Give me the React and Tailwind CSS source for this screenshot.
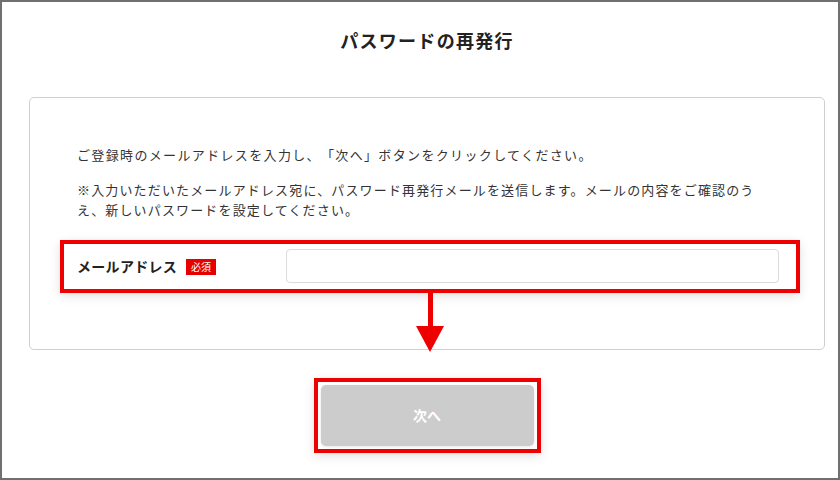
const App = () => {
  return (
    <div
      className="w-[840px] h-[480px] bg-white border-2 border-[#707070] overflow-hidden text-[#333] [text-spacing-trim:space-all]"
      style={{ fontFamily: '"Noto Sans CJK JP", "Noto Sans", sans-serif' }}
    >
      <div className="ml-[27px] w-[796px]">
        {/* Title */}
        <h1 className="pt-[25px] text-center text-[18px] leading-[26px] font-bold tracking-[1.3px] text-[#222]">
          パスワードの再発行
        </h1>

        {/* Card */}
        <div className="relative mt-[44px] border border-[#cfcfcf] rounded-[5px] pt-[47px] pb-[56px]">
          <p className="pl-[47px] text-[13px] leading-[20px] tracking-[1.35px] whitespace-nowrap">
            ご登録時のメールアドレスを入力し、「次へ」ボタンをクリックしてください。
          </p>
          <p className="mt-[15px] pl-[47px] text-[13px] leading-[20px] tracking-[1.15px] whitespace-nowrap">
            ※入力いただいたメールアドレス宛に、パスワード再発行メールを送信します。メールの内容をご確認のう
            <br />
            え、新しいパスワードを設定してください。
          </p>

          {/* Form row highlighted */}
          <div className="mt-[20px] ml-[30px] mr-[24px] h-[53px] border-4 border-[#ee0000] shadow-[0_3px_10px_rgba(0,0,0,0.12)] flex items-center pl-[13px] pr-[17px]">
            <div className="w-[209px] flex items-center gap-[9px]">
              <span className="text-[14px] font-bold tracking-[0.3px] text-[#222]">メールアドレス</span>
              <span className="bg-[#e60000] text-white text-[10px] leading-[16px] px-[5px]">必須</span>
            </div>
            <input
              type="text"
              className="flex-1 h-[34px] -mt-px border border-[#dcdcdc] rounded-[4px] bg-white outline-none"
            />
          </div>

          {/* Arrow */}
          <div className="absolute left-[386px] top-[195px] flex flex-col items-center">
            <div className="w-[5px] h-[36px] bg-[#ee0000]" />
            <svg width="28" height="26" viewBox="0 0 28 26" className="-mt-[3px]">
              <polygon points="0,0 28,0 14,26" fill="#ee0000" />
            </svg>
          </div>
        </div>

        {/* Button highlighted */}
        <div className="mt-[28px] mx-auto w-[227px] h-[75px] border-[4px] border-[#ee0000] p-[3px] shadow-[0_3px_10px_rgba(0,0,0,0.12)]">
          <button className="w-full h-full rounded-[5px] bg-[#cccccc] text-white text-[14px] font-bold shadow-[0_1px_3px_rgba(0,0,0,0.1)]">
            次へ
          </button>
        </div>
      </div>
    </div>
  );
};

export default App;
